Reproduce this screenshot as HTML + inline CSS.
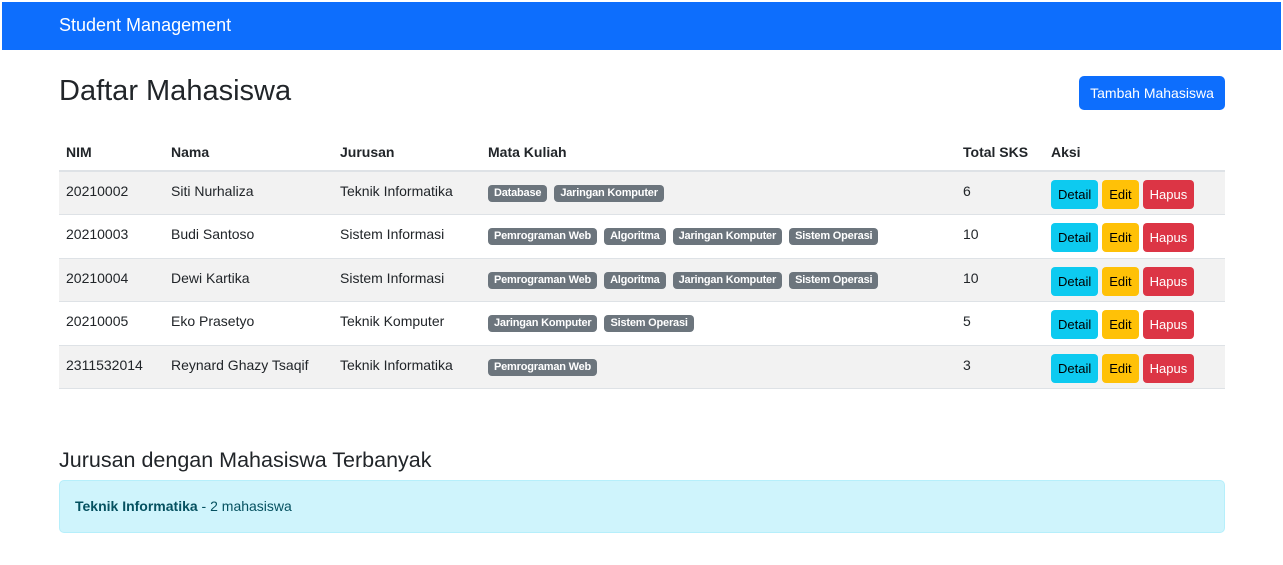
<!DOCTYPE html>
<html><head><meta charset="utf-8"><style>
*{box-sizing:border-box;margin:0;padding:0}
body{width:1283px;height:565px;background:#fff;font-family:"Liberation Sans",sans-serif;color:#212529;font-size:14px;position:relative;overflow:hidden}
.nav{position:absolute;left:2px;top:2px;width:1279px;height:48px;background:#0d6efd;color:#fff;font-size:18px;padding-left:57px;line-height:47px}
h1{position:absolute;left:59px;top:72px;font-size:29px;font-weight:500;line-height:38px}
.add{position:absolute;left:1079px;top:76px;width:146px;height:34px;background:#0d6efd;color:#fff;border-radius:5px;font-size:14px;text-align:center;line-height:34px}
table{position:absolute;left:59px;top:134px;width:1166px;border-collapse:collapse}
th{text-align:left;font-weight:bold;height:37px;padding:0 7px;border-bottom:2px solid #dee2e6;font-size:14px}
td{height:43.6px;padding:0 7px;border-bottom:1px solid #dee2e6;vertical-align:top;padding-top:11px;font-size:14px}
tr.s td{background:#f2f2f2}
.b{display:inline-block;background:#6c757d;color:#fff;font-size:11px;font-weight:bold;padding:0 6px;height:17px;line-height:17px;border-radius:4px;margin-right:7px;margin-top:1px;letter-spacing:-0.2px}
.btn{display:inline-block;height:29px;line-height:29px;padding:0 7px;border-radius:4px;font-size:13px;margin-right:4px;margin-top:-3px}
.d{background:#0dcaf0;color:#000}.e{background:#ffc107;color:#000}.h{background:#dc3545;color:#fff}
h3{position:absolute;left:59px;top:448px;font-size:21.5px;font-weight:500}
.alert{position:absolute;left:59px;top:480px;width:1166px;height:53px;background:#cff4fc;border:1px solid #b6effb;border-radius:5px;color:#055160;padding-left:15px;line-height:51px;font-size:14px}
</style></head><body>
<div class="nav">Student Management</div>
<h1>Daftar Mahasiswa</h1>
<div class="add">Tambah Mahasiswa</div>
<table>
<colgroup><col style="width:105px"><col style="width:169px"><col style="width:148px"><col style="width:475px"><col style="width:88px"><col></colgroup>
<tr><th>NIM</th><th>Nama</th><th>Jurusan</th><th>Mata Kuliah</th><th>Total SKS</th><th>Aksi</th></tr>
<tr class="s"><td>20210002</td><td>Siti Nurhaliza</td><td>Teknik Informatika</td><td><span class="b">Database</span><span class="b">Jaringan Komputer</span></td><td>6</td><td><span class="btn d">Detail</span><span class="btn e">Edit</span><span class="btn h">Hapus</span></td></tr>
<tr><td>20210003</td><td>Budi Santoso</td><td>Sistem Informasi</td><td><span class="b">Pemrograman Web</span><span class="b">Algoritma</span><span class="b">Jaringan Komputer</span><span class="b">Sistem Operasi</span></td><td>10</td><td><span class="btn d">Detail</span><span class="btn e">Edit</span><span class="btn h">Hapus</span></td></tr>
<tr class="s"><td>20210004</td><td>Dewi Kartika</td><td>Sistem Informasi</td><td><span class="b">Pemrograman Web</span><span class="b">Algoritma</span><span class="b">Jaringan Komputer</span><span class="b">Sistem Operasi</span></td><td>10</td><td><span class="btn d">Detail</span><span class="btn e">Edit</span><span class="btn h">Hapus</span></td></tr>
<tr><td>20210005</td><td>Eko Prasetyo</td><td>Teknik Komputer</td><td><span class="b">Jaringan Komputer</span><span class="b">Sistem Operasi</span></td><td>5</td><td><span class="btn d">Detail</span><span class="btn e">Edit</span><span class="btn h">Hapus</span></td></tr>
<tr class="s"><td>2311532014</td><td>Reynard Ghazy Tsaqif</td><td>Teknik Informatika</td><td><span class="b">Pemrograman Web</span></td><td>3</td><td><span class="btn d">Detail</span><span class="btn e">Edit</span><span class="btn h">Hapus</span></td></tr>
</table>
<h3>Jurusan dengan Mahasiswa Terbanyak</h3>
<div class="alert"><b>Teknik Informatika</b> - 2 mahasiswa</div>
</body></html>
